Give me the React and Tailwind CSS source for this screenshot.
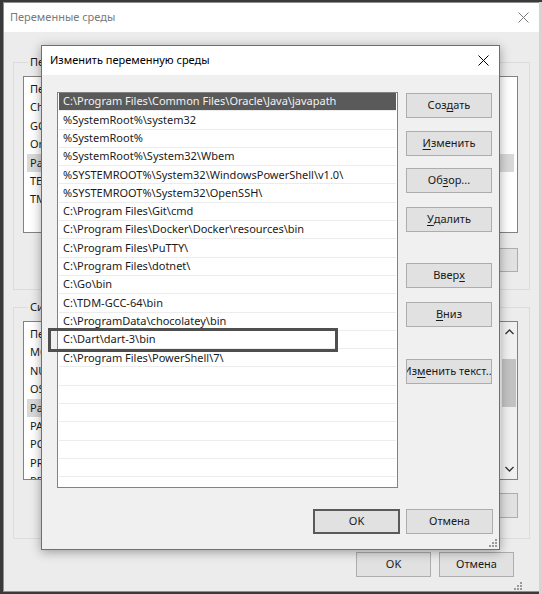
import React from "react";

const paths = [
  "C:\\Program Files\\Common Files\\Oracle\\Java\\javapath",
  "%SystemRoot%\\system32",
  "%SystemRoot%",
  "%SystemRoot%\\System32\\Wbem",
  "%SYSTEMROOT%\\System32\\WindowsPowerShell\\v1.0\\",
  "%SYSTEMROOT%\\System32\\OpenSSH\\",
  "C:\\Program Files\\Git\\cmd",
  "C:\\Program Files\\Docker\\Docker\\resources\\bin",
  "C:\\Program Files\\PuTTY\\",
  "C:\\Program Files\\dotnet\\",
  "C:\\Go\\bin",
  "C:\\TDM-GCC-64\\bin",
  "C:\\ProgramData\\chocolatey\\bin",
  "C:\\Dart\\dart-3\\bin",
  "C:\\Program Files\\PowerShell\\7\\",
];

const userVars = ["Переменная", "ChocolateyLastPathUpdate", "GOPATH", "OneDrive", "Path", "TEMP", "TMP"];
const sysVars = [
  "Переменная",
  "MOZ_PLUGIN_PATH",
  "NUMBER_OF_PROCESSORS",
  "OS",
  "Path",
  "PATHEXT",
  "POWERSHELL_DISTRIBUTION_CHANNEL",
  "PROCESSOR_ARCHITECTURE",
  "PROCESSOR_IDENTIFIER",
];

function CloseIcon({ color = "#000" }) {
  return (
    <svg width="11" height="11" viewBox="0 0 11 11">
      <path d="M0.5 0.5 L10.5 10.5 M10.5 0.5 L0.5 10.5" stroke={color} strokeWidth="1" />
    </svg>
  );
}

function Grip() {
  return (
    <svg width="8" height="8" viewBox="0 0 8 8">
      <rect x="6" y="0" width="2" height="2" fill="#9a9a9a" />
      <rect x="3" y="3" width="2" height="2" fill="#9a9a9a" />
      <rect x="6" y="3" width="2" height="2" fill="#9a9a9a" />
      <rect x="0" y="6" width="2" height="2" fill="#9a9a9a" />
      <rect x="3" y="6" width="2" height="2" fill="#9a9a9a" />
      <rect x="6" y="6" width="2" height="2" fill="#9a9a9a" />
    </svg>
  );
}

function WinButton({ children, className = "" }) {
  return (
    <div
      className={
        "flex h-[25px] items-center justify-center overflow-hidden whitespace-nowrap border border-[#adadad] bg-[#e1e1e1] text-[11px] text-[#1a1a1a] " +
        className
      }
    >
      {children}
    </div>
  );
}

function VarList({ items, selected, height, scroll }) {
  return (
    <div className={"relative flex border border-[#828282] bg-white " + height}>
      <div className="flex-1 overflow-hidden pt-[3px]">
        {items.map((name, i) => (
          <div
            key={i}
            className={
              "mx-[3px] flex h-[18.4px] items-center pl-[3px] text-[11px] text-[#1a1a1a] " +
              (i === selected ? "bg-[#d9d9d9]" : "")
            }
          >
            {name}
          </div>
        ))}
      </div>
      {scroll && (
        <div className="flex w-[16px] flex-col items-center bg-[#f0f0f0]">
          <div className="flex h-[20px] items-center justify-center">
            <svg width="9" height="6" viewBox="0 0 9 6">
              <path d="M0.5 5 L4.5 1 L8.5 5" stroke="#333" strokeWidth="1.3" fill="none" />
            </svg>
          </div>
          <div className="mt-[17px] h-[48px] w-[14px] bg-[#c2c2c2]" />
          <div className="flex-1" />
          <div className="flex h-[20px] items-center justify-center">
            <svg width="9" height="6" viewBox="0 0 9 6">
              <path d="M0.5 1 L4.5 5 L8.5 1" stroke="#333" strokeWidth="1.3" fill="none" />
            </svg>
          </div>
        </div>
      )}
    </div>
  );
}

function Group({ title, children, className = "" }) {
  return (
    <fieldset className={"border border-[#dcdcdc] px-[9px] " + className}>
      <legend className="ml-[5px] px-[2px] text-[11px] leading-[16px] text-[#1a1a1a]">{title}</legend>
      {children}
    </fieldset>
  );
}

function OuterWindow() {
  return (
    <div className="ml-[3px] flex h-[590px] w-[537px] flex-col border border-[#8f8f8f] bg-[#ececec]">
      <div className="flex h-[29px] items-center justify-between bg-white pl-[6px] pr-[10px]">
        <span className="text-[11px] text-[#7a7a7a]">Переменные среды</span>
        <CloseIcon color="#7a7a7a" />
      </div>

      <div className="flex flex-1 flex-col px-[9px]">
        {/* user vars */}
        <Group title="Переменные среды пользователя для user" className="mt-[22px] h-[236px] pr-[11px]">
          <div className="mt-[6px]">
            <VarList items={userVars} selected={4} height="h-[157px]" />
          </div>
          <div className="mt-[15px] flex justify-end gap-[8px]">
            <WinButton className="w-[86px] !h-[24px]">Создать...</WinButton>
            <WinButton className="w-[86px] !h-[24px]">Изменить...</WinButton>
            <WinButton className="w-[86px] !h-[24px]">Удалить</WinButton>
          </div>
        </Group>

        {/* system vars */}
        <Group title="Системные переменные" className="mt-[9px] h-[240px] pr-[11px]">
          <div className="mt-[6px]">
            <VarList items={sysVars} selected={4} height="h-[159px]" scroll />
          </div>
          <div className="mt-[13px] flex justify-end gap-[8px]">
            <WinButton className="w-[86px]">Создать...</WinButton>
            <WinButton className="w-[86px]">Изменить...</WinButton>
            <WinButton className="w-[86px]">Удалить</WinButton>
          </div>
        </Group>

        <div className="mt-[13px] flex justify-end gap-[8px] pr-[16px]">
          <WinButton className="w-[75px]">OK</WinButton>
          <WinButton className="w-[75px]">Отмена</WinButton>
        </div>
        <div className="flex flex-1 items-end justify-end pb-[1px] pr-[8px]">
          <Grip />
        </div>
      </div>
    </div>
  );
}

function EditDialog() {
  const rows = [...paths, ...Array(8).fill("")];
  return (
    <div className="absolute left-[41px] top-[45px] flex h-[505px] w-[459px] flex-col border border-[#6f6f6f] bg-[#f0f0f0] shadow-[0_2px_10px_rgba(0,0,0,0.35)]">
      <div className="flex h-[29px] items-center justify-between bg-white pl-[8px] pr-[10px]">
        <span className="text-[11px] text-[#000]">Изменить переменную среды</span>
        <CloseIcon />
      </div>

      <div className="flex pl-[15px] pt-[17px]">
        <div className="h-[396px] w-[341px] overflow-hidden border border-[#828282] bg-white">
          {rows.map((p, i) => (
            <div
              key={i}
              className={
                "mx-[1px] flex h-[18.3px] items-center border-b border-[#ececec] pl-[4px] text-[11px] " +
                (i === 0 ? "bg-[#5a5a5a] text-[#f2f2f2]" : "text-[#1a1a1a]")
              }
            >
              {p}
            </div>
          ))}
        </div>

        <div className="ml-[8px] flex w-[86px] flex-col">
          <WinButton className="mt-[1px]">
            Соз<u className="underline-offset-2">д</u>ать
          </WinButton>
          <WinButton className="mt-[13px]">
            <u className="underline-offset-2">И</u>зменить
          </WinButton>
          <WinButton className="mt-[12px]">
            Об<u className="underline-offset-2">з</u>ор...
          </WinButton>
          <WinButton className="mt-[14px]">
            <u className="underline-offset-2">У</u>далить
          </WinButton>
          <WinButton className="mt-[31px]">
            Ввер<u className="underline-offset-2">х</u>
          </WinButton>
          <WinButton className="mt-[14px]">
            <u className="underline-offset-2">В</u>низ
          </WinButton>
          <WinButton className="mt-[32px]">
            Из<u className="underline-offset-2">м</u>енить текст...
          </WinButton>
        </div>
      </div>

      <div className="mt-[21px] flex justify-end gap-[6px] pr-[6px]">
        <WinButton className="w-[87px] !border-2 !border-[#5a5a5a]">OK</WinButton>
        <WinButton className="w-[87px]">Отмена</WinButton>
      </div>
      <div className="flex flex-1 items-end justify-end pb-[2px] pr-[2px]">
        <Grip />
      </div>
    </div>
  );
}

export default function App() {
  return (
    <div className="relative h-[594px] w-[542px] overflow-hidden bg-[#3a3a3a] pt-[2px] font-['Segoe_UI','Noto_Sans',sans-serif]">
      <div className="absolute right-0 top-[2px] h-[592px] w-[3px] bg-[#d4d4d4]" />
      <OuterWindow />
      <EditDialog />
      {/* annotation frame around the added path */}
      <div className="absolute left-[48px] top-[328px] h-[24px] w-[290px] border-[3px] border-[#4f4f4f]" />
    </div>
  );
}
